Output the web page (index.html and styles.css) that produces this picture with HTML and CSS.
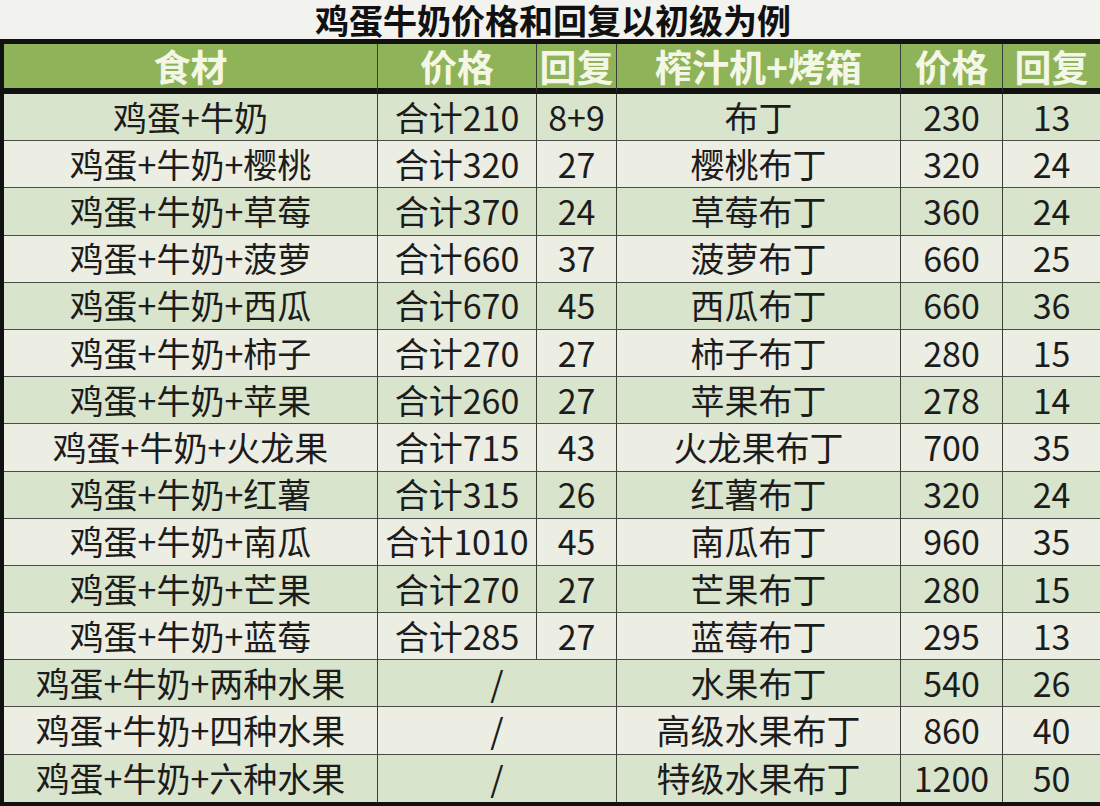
FILE: index.html
```
<!DOCTYPE html>
<html lang="zh-CN">
<head>
<meta charset="utf-8">
<title>鸡蛋牛奶价格和回复以初级为例</title>
<link rel="stylesheet" href="styles.css">
</head>
<body>
<div class="page">
  <h1 class="title">鸡蛋牛奶价格和回复以初级为例</h1>
  <table class="recipes">
    <colgroup>
      <col class="c-ing"><col class="c-price"><col class="c-rec"><col class="c-dish"><col class="c-dprice"><col class="c-drec">
    </colgroup>
    <thead>
      <tr>
        <th>食材</th><th>价格</th><th>回复</th><th>榨汁机+烤箱</th><th>价格</th><th>回复</th>
      </tr>
    </thead>
    <tbody>
      <tr class="g"><td>鸡蛋+牛奶</td><td>合计210</td><td>8+9</td><td>布丁</td><td>230</td><td>13</td></tr>
      <tr class="w"><td>鸡蛋+牛奶+樱桃</td><td>合计320</td><td>27</td><td>樱桃布丁</td><td>320</td><td>24</td></tr>
      <tr class="g"><td>鸡蛋+牛奶+草莓</td><td>合计370</td><td>24</td><td>草莓布丁</td><td>360</td><td>24</td></tr>
      <tr class="w"><td>鸡蛋+牛奶+菠萝</td><td>合计660</td><td>37</td><td>菠萝布丁</td><td>660</td><td>25</td></tr>
      <tr class="g"><td>鸡蛋+牛奶+西瓜</td><td>合计670</td><td>45</td><td>西瓜布丁</td><td>660</td><td>36</td></tr>
      <tr class="w"><td>鸡蛋+牛奶+柿子</td><td>合计270</td><td>27</td><td>柿子布丁</td><td>280</td><td>15</td></tr>
      <tr class="g"><td>鸡蛋+牛奶+苹果</td><td>合计260</td><td>27</td><td>苹果布丁</td><td>278</td><td>14</td></tr>
      <tr class="w"><td>鸡蛋+牛奶+火龙果</td><td>合计715</td><td>43</td><td>火龙果布丁</td><td>700</td><td>35</td></tr>
      <tr class="g"><td>鸡蛋+牛奶+红薯</td><td>合计315</td><td>26</td><td>红薯布丁</td><td>320</td><td>24</td></tr>
      <tr class="w"><td>鸡蛋+牛奶+南瓜</td><td>合计1010</td><td>45</td><td>南瓜布丁</td><td>960</td><td>35</td></tr>
      <tr class="g"><td>鸡蛋+牛奶+芒果</td><td>合计270</td><td>27</td><td>芒果布丁</td><td>280</td><td>15</td></tr>
      <tr class="w"><td>鸡蛋+牛奶+蓝莓</td><td>合计285</td><td>27</td><td>蓝莓布丁</td><td>295</td><td>13</td></tr>
      <tr class="g"><td>鸡蛋+牛奶+两种水果</td><td colspan="2">/</td><td>水果布丁</td><td>540</td><td>26</td></tr>
      <tr class="w"><td>鸡蛋+牛奶+四种水果</td><td colspan="2">/</td><td>高级水果布丁</td><td>860</td><td>40</td></tr>
      <tr class="g last"><td>鸡蛋+牛奶+六种水果</td><td colspan="2">/</td><td>特级水果布丁</td><td>1200</td><td>50</td></tr>
    </tbody>
  </table>
</div>
</body>
</html>
```

FILE: styles.css
```
html, body {
  margin: 0;
  padding: 0;
  background: #f2f2ef;
}

.page {
  width: 1100px;
  font-family: "Noto Sans CJK SC", "Noto Sans", sans-serif;
  color: #1c1c1c;
}

.title {
  margin: 0;
  height: 39px;
  line-height: 39px;
  font-size: 34px;
  font-weight: 700;
  text-align: center;
  color: #111;
  padding-left: 6px;
}

.recipes {
  width: 1100px;
  table-layout: fixed;
  border-collapse: separate;
  border-spacing: 0;
  border-top: 5px solid #111;
  border-left: 4px solid #111;
  border-bottom: 4px solid #111;
}

.c-ing { width: 374px; }
.c-price { width: 159px; }
.c-rec { width: 80px; }
.c-dish { width: 284px; }
.c-dprice { width: 102px; }
.c-drec { width: 97px; }

.recipes th,
.recipes td {
  padding: 0;
  text-align: center;
  vertical-align: middle;
  white-space: nowrap;
  border-right: 1px solid #3b3f36;
  line-height: 1.2;
}

.recipes th:last-child,
.recipes td:last-child {
  border-right: none;
}

.recipes thead tr {
  height: 50px;
}

.recipes th {
  background: #8eb359;
  color: #f4f7e6;
  font-size: 37px;
  line-height: 44px;
  font-weight: 700;
  border-bottom: 6px solid #111;
}

.recipes tbody tr {
  height: 47.2px;
}

.recipes td {
  font-size: 34px;
  font-weight: 400;
  border-bottom: 1px solid #4a4d45;
}

.recipes tr.last td {
  border-bottom: none;
}

.recipes tr.g td {
  background: #d9e4cc;
}

.recipes tr.w td {
  background: #ecede3;
}
```
